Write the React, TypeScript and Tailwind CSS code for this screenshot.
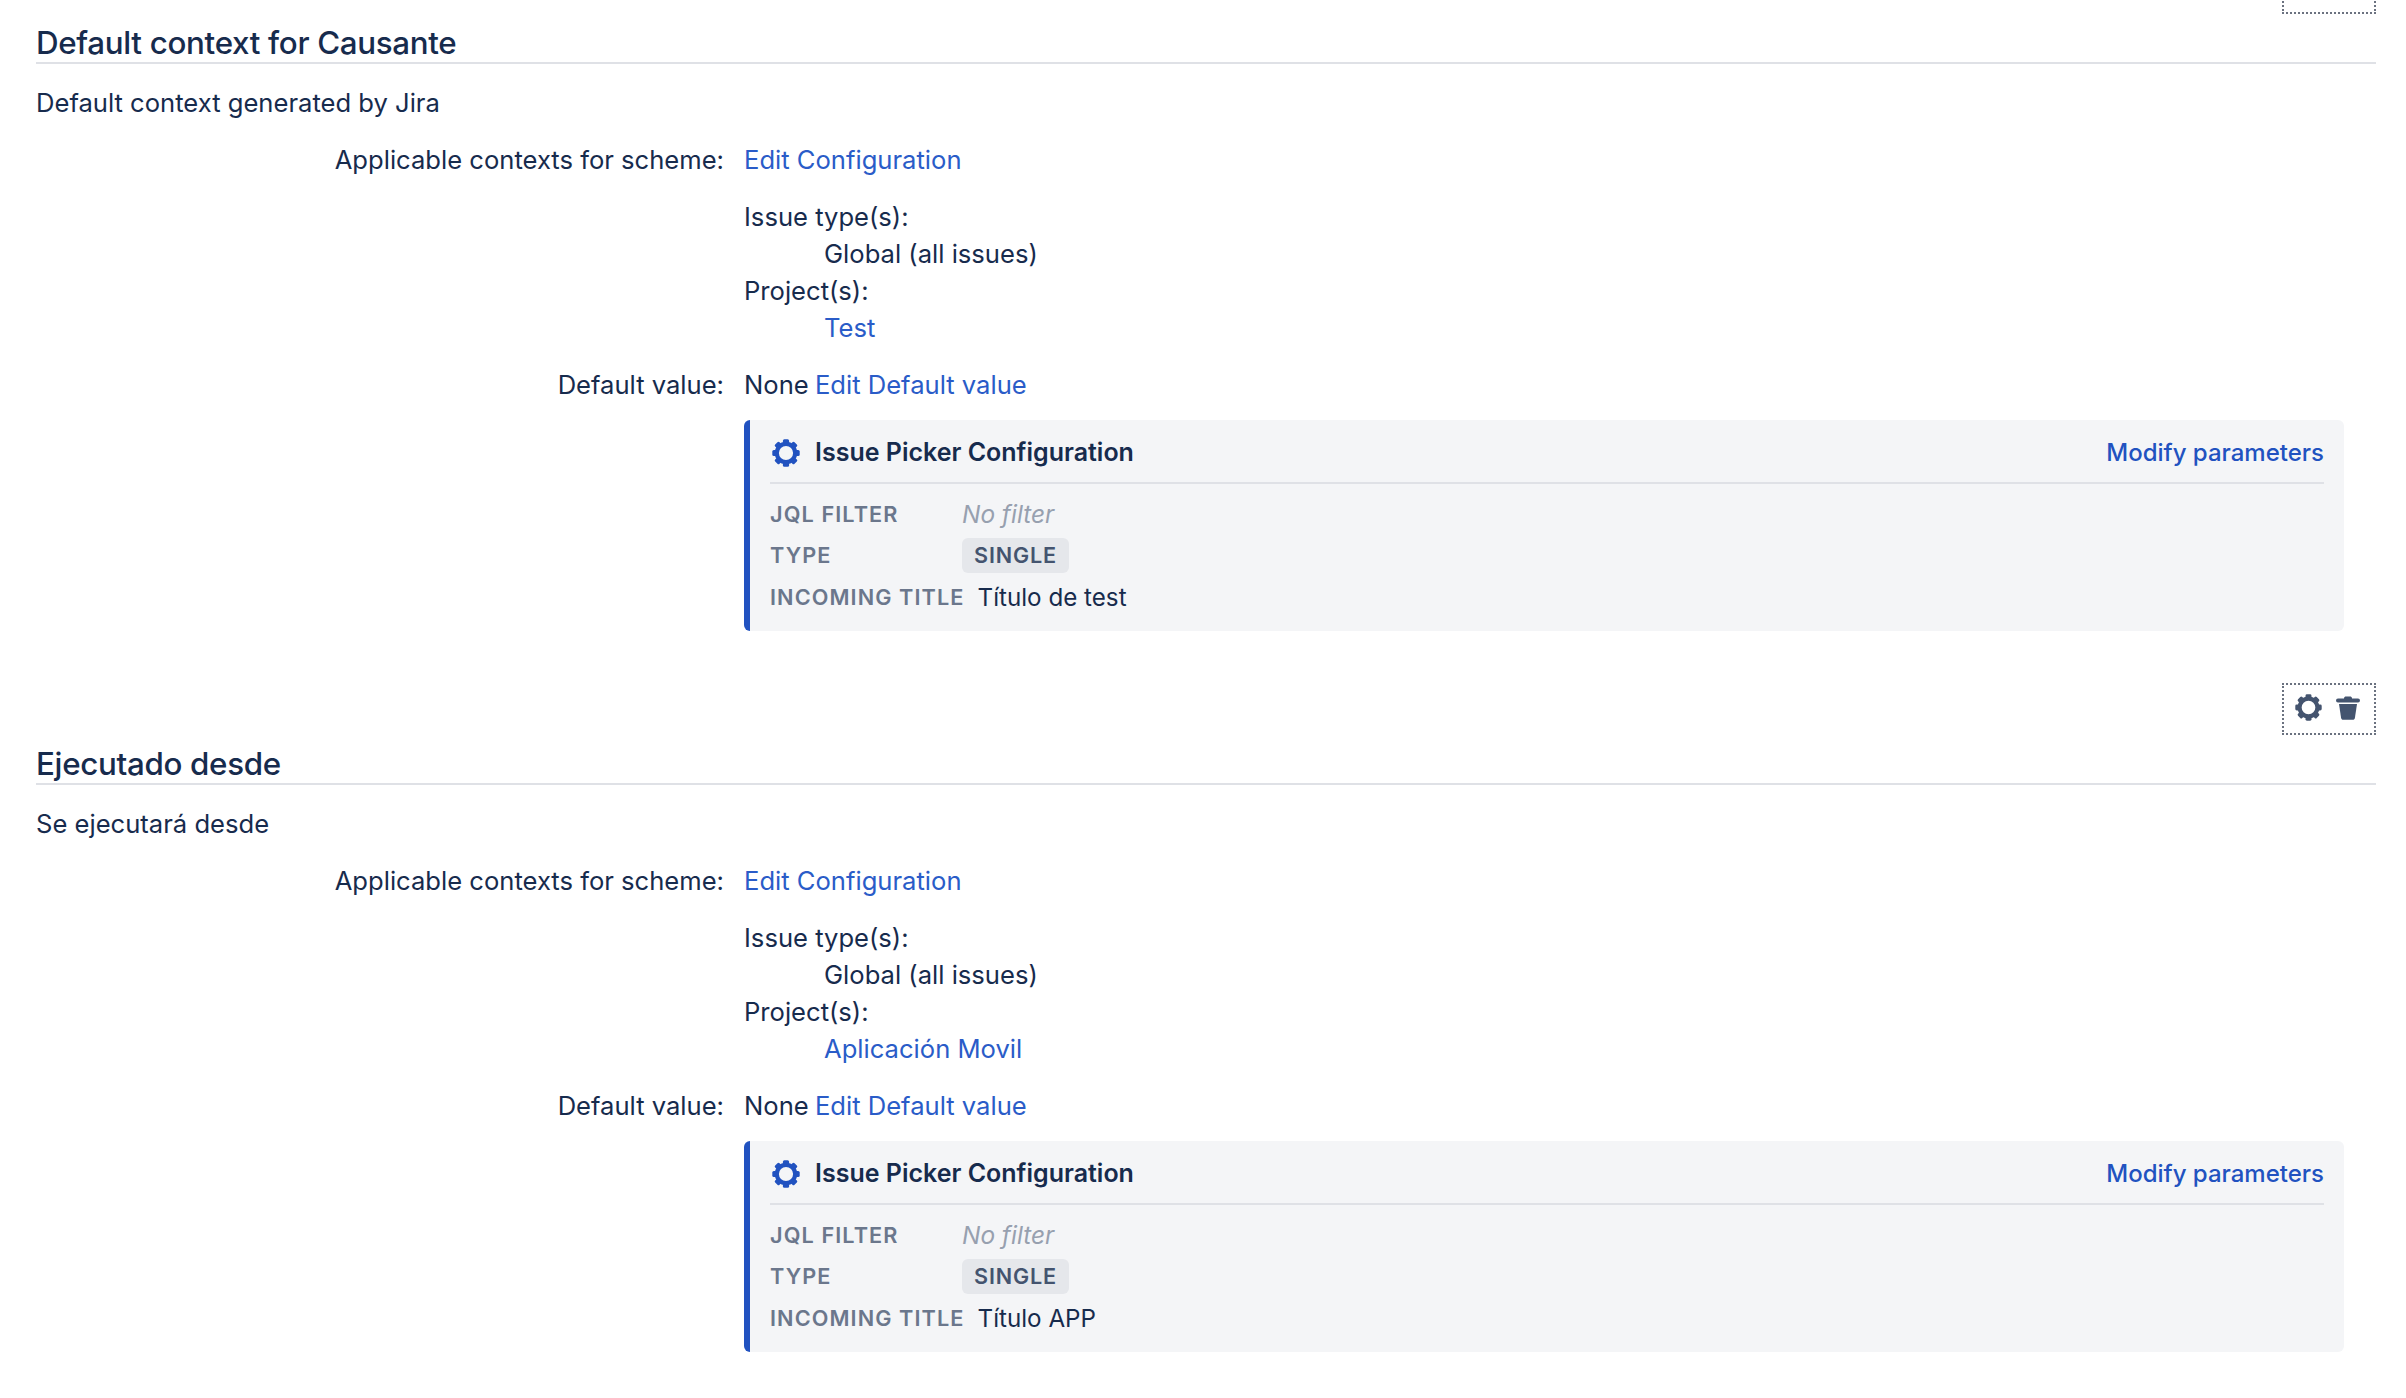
const font = { fontFamily: 'Inter, "Liberation Sans", sans-serif' }

function GearIcon({ className }: { className: string }) {
  const angles = [0, 45, 90, 135, 180, 225, 270, 315]
  return (
    <svg viewBox="0 0 28 28" className={className} aria-hidden="true">
      <circle cx="14" cy="14" r="9.2" fill="none" stroke="currentColor" strokeWidth="4.2" />
      {angles.map((a) => (
        <rect key={a} x="10.9" y="0.3" width="6.2" height="4.4" rx="1.5" fill="currentColor" transform={`rotate(${a} 14 14)`} />
      ))}
    </svg>
  )
}

function TrashIcon() {
  return (
    <svg viewBox="0 0 24 24" className="h-[24px] w-[24px] text-[#44546f]" aria-hidden="true">
      <path d="M8 2.2C8 1 9 .4 10 .4h4c1 0 2 .6 2 1.8V3H8z" fill="currentColor" />
      <rect x="0" y="2.4" width="24" height="4" rx="2" fill="currentColor" />
      <path d="M3 8h18l-2.1 14c-.2 1.2-1 1.8-2 1.8H7.1c-1 0-1.8-.6-2-1.8z" fill="currentColor" />
    </svg>
  )
}

interface SectionProps {
  title: string
  description: string
  project: string
  incomingTitle: string
}

function Row({ label, children }: { label: string; children: React.ReactNode }) {
  return (
    <div className="flex">
      <div className="w-[688px] text-right">{label}</div>
      <div className="ml-[20px] flex-1">{children}</div>
    </div>
  )
}

function FieldSection({ title, description, project, incomingTitle }: SectionProps) {
  return (
    <section>
      <div className="flex justify-end">
        <div className="flex h-[52px] w-[94px] items-center gap-[14px] border-2 border-dotted border-[#6b7280] pb-[3px] pl-[11px]">
          <GearIcon className="h-[27px] w-[27px] text-[#44546f]" />
          <TrashIcon />
        </div>
      </div>

      <h2 className="border-b-2 border-[#dfe1e6] pt-[10px] text-[31.3px] leading-[38px] font-medium tracking-[-0.01em] text-[#172b4d]">
        {title}
      </h2>

      <p className="mt-[20px]">{description}</p>

      <div className="mt-[20px]">
        <Row label="Applicable contexts for scheme:">
          <a className="text-[#2a5cc8]">Edit Configuration</a>
        </Row>
      </div>

      <div className="mt-[20px] ml-[708px]">
        <div>Issue type(s):</div>
        <div className="pl-[80px]">Global (all issues)</div>
        <div>Project(s):</div>
        <div className="pl-[80px] text-[#2a5cc8]">{project}</div>
      </div>

      <div className="mt-[20px]">
        <Row label="Default value:">
          None <a className="ml-[-1px] text-[#2a5cc8]">Edit Default value</a>
        </Row>
      </div>

      <div className="mt-[17px] ml-[708px] mr-[32px] h-[211px] rounded-[6px] border-l-[6px] border-[#2152c0] bg-[#f4f5f7] pl-[20px] pr-[20px]">
        <div className="flex h-[64px] items-center border-b-2 border-[#dfe1e6] pt-[3px]">
          <GearIcon className="ml-[2px] h-[28px] w-[28px] text-[#2152c0]" />
          <span className="ml-[15px] text-[25px] font-semibold text-[#172b4d]">Issue Picker Configuration</span>
          <a className="ml-auto text-[24px] font-medium text-[#2152c0]">Modify parameters</a>
        </div>
        <div className="mt-[10px] flex flex-col">
          <div className="flex h-[41px] items-center">
            <span className="min-w-[192px] text-[21.7px] font-semibold tracking-[0.05em] text-[#6b778c]">JQL FILTER</span>
            <span className="text-[24.4px] italic text-[#97a0af]">No filter</span>
          </div>
          <div className="flex h-[41px] items-center">
            <span className="min-w-[192px] text-[21.7px] font-semibold tracking-[0.05em] text-[#6b778c]">TYPE</span>
            <span className="flex h-[35px] w-[107px] items-center justify-center rounded-[6px] bg-[#e5e7eb] text-[21.6px] font-semibold tracking-[0.04em] text-[#44546f]">
              SINGLE
            </span>
          </div>
          <div className="flex h-[41px] items-center pt-[2px]">
            <span className="min-w-[192px] text-[21.7px] font-semibold tracking-[0.05em] text-[#6b778c]">INCOMING TITLE</span>
            <span className="ml-[13px] text-[24.2px]">{incomingTitle}</span>
          </div>
        </div>
      </div>
    </section>
  )
}

export default function App() {
  return (
    <div className="h-[1398px] overflow-hidden bg-white pl-[36px] pr-[30px] text-[25.6px] leading-[37px] text-[#172b4d]" style={font}>
      <div className="-mt-[38px] flex flex-col gap-[52px]">
        <FieldSection
          title="Default context for Causante"
          description="Default context generated by Jira"
          project="Test"
          incomingTitle="Título de test"
        />
        <FieldSection
          title="Ejecutado desde"
          description="Se ejecutará desde"
          project="Aplicación Movil"
          incomingTitle="Título APP"
        />
      </div>
    </div>
  )
}
